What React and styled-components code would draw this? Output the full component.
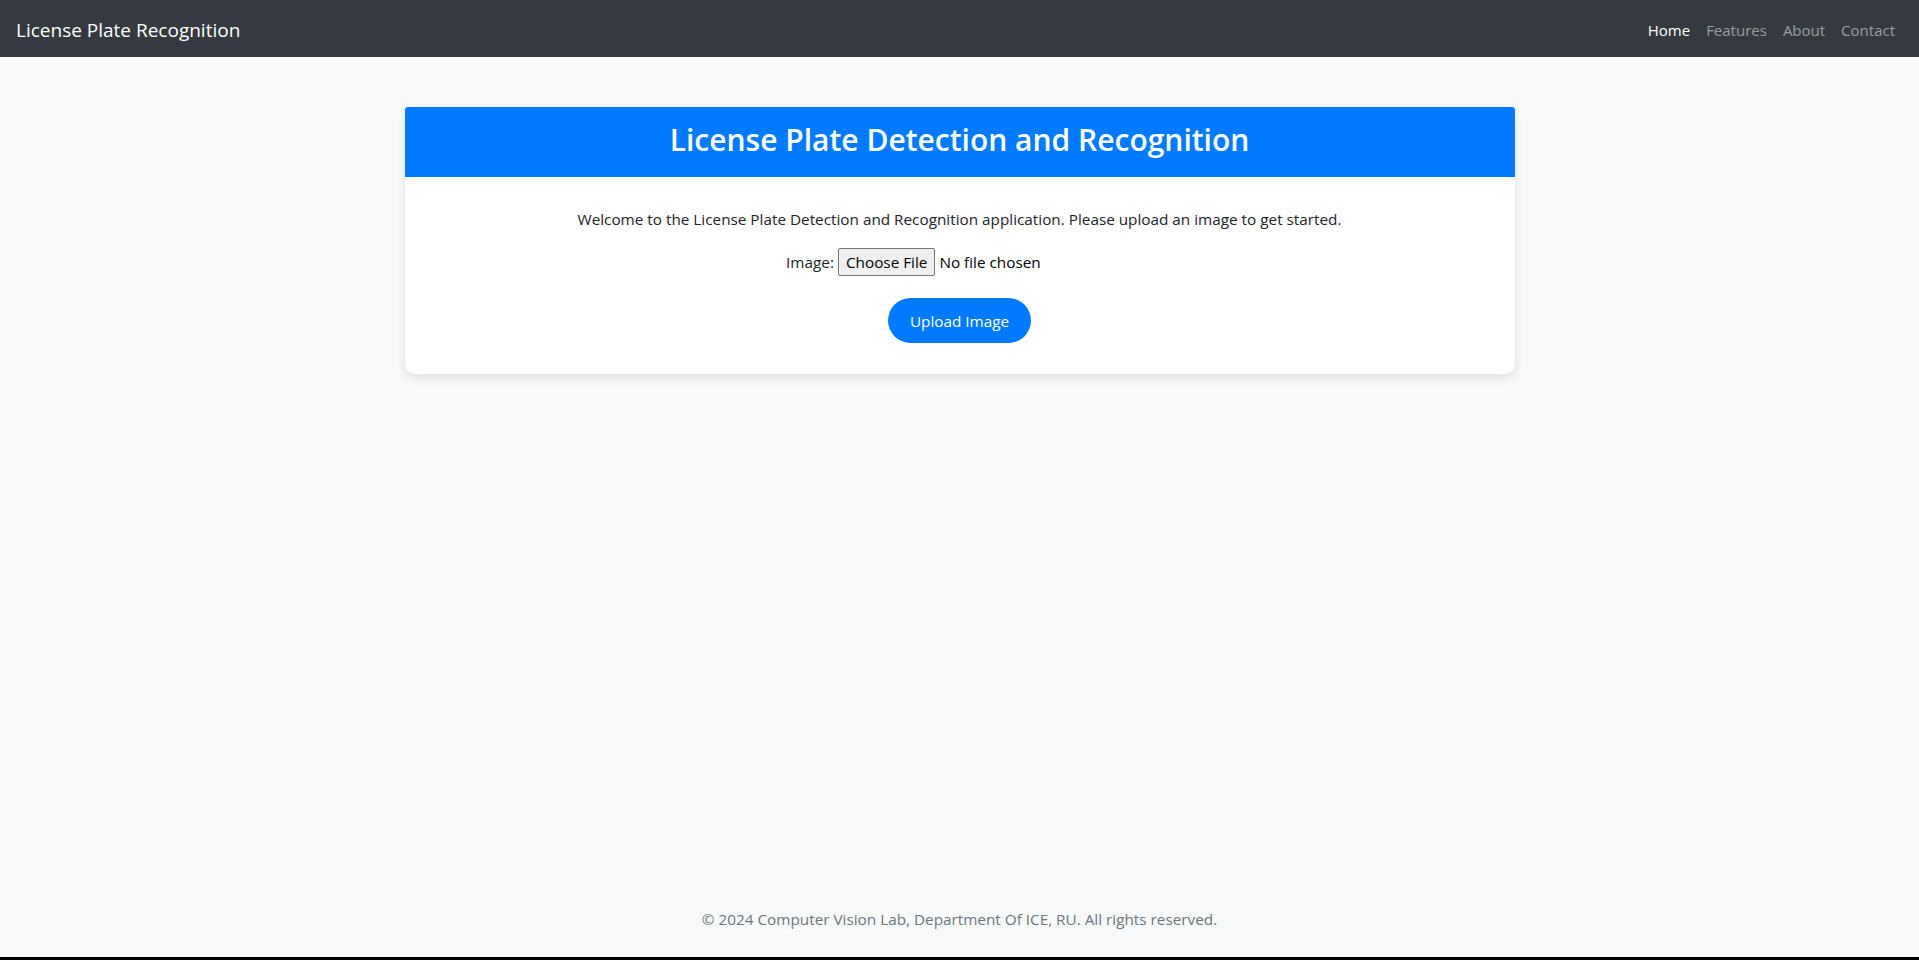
import React, { useState } from 'react';
import styled, { createGlobalStyle } from 'styled-components';

const GlobalStyle = createGlobalStyle`
  * { box-sizing: border-box; }
  body {
    margin: 0;
    background: #f8f9fa;
    font-family: "Open Sans", "Noto Sans", sans-serif;
    color: #212529;
  }
`;

const Page = styled.div`
  height: 100vh;
  display: flex;
  flex-direction: column;
  border-bottom: 3px solid #000;
`;

const Navbar = styled.nav`
  height: 57px;
  flex-shrink: 0;
  background: #343a40;
  padding: 2px 16px 0;
  display: flex;
  align-items: center;
  justify-content: space-between;
`;

const Brand = styled.a`
  color: #fff;
  font-size: 19px;
  text-decoration: none;
`;

const NavList = styled.ul`
  list-style: none;
  display: flex;
  margin: 0;
  padding: 0;
`;

const NavLink = styled.a`
  display: block;
  padding: 0 8px;
  font-size: 15px;
  text-decoration: none;
  color: ${p => (p.$active ? '#fff' : 'rgba(255, 255, 255, 0.5)')};
`;

const Main = styled.main`
  flex: 1;
`;

const Container = styled.div`
  width: 1110px;
  margin: 50px auto 0;
`;

const Card = styled.div`
  background: #fff;
  border-radius: 10px;
  box-shadow: 0 4px 10px rgba(0, 0, 0, 0.1);
`;

const CardHeader = styled.div`
  background: #007bff;
  border-radius: 3px 3px 0 0;
  padding: 10px 20px 14px;
  text-align: center;
`;

const Title = styled.h1`
  margin: 0;
  color: #fff;
  font-size: 30px;
  font-weight: 600;
  line-height: 46px;
`;

const CardBody = styled.div`
  padding: 30px 20px 31px;
  text-align: center;
  font-size: 15.3px;
`;

const Lead = styled.p`
  margin: 0 0 17px;
  line-height: 24px;
`;

const FileRow = styled.label`
  display: flex;
  justify-content: center;
  align-items: center;
  gap: 4px;
  height: 28px;
  margin-bottom: 22px;
  input { display: none; }
`;

const FileField = styled.span`
  display: flex;
  align-items: center;
  gap: 4px;
  width: 295px;
`;

const ChooseButton = styled.span`
  display: inline-flex;
  align-items: center;
  height: 28px;
  padding: 0 7px;
  background: #efefef;
  border: 1px solid #767676;
  border-radius: 2px;
  color: #000;
`;

const FileName = styled.span`
  color: #000;
`;

const UploadButton = styled.button`
  height: 45px;
  padding: 0 22px;
  border: none;
  border-radius: 23px;
  background: #007bff;
  color: #fff;
  font-family: inherit;
  font-size: 15.3px;
  cursor: pointer;
`;

const Footer = styled.footer`
  text-align: center;
  color: #6c757d;
  font-size: 15.3px;
  line-height: 24px;
  padding-bottom: 26px;
`;

const links = ['Home', 'Features', 'About', 'Contact'];

export default function App() {
  const [file, setFile] = useState(null);

  return (
    <Page>
      <GlobalStyle />
      <Navbar>
        <Brand href="#">License Plate Recognition</Brand>
        <NavList>
          {links.map((l, i) => (
            <li key={l}>
              <NavLink href="#" $active={i === 0}>{l}</NavLink>
            </li>
          ))}
        </NavList>
      </Navbar>
      <Main>
        <Container>
          <Card>
            <CardHeader>
              <Title>License Plate Detection and Recognition</Title>
            </CardHeader>
            <CardBody>
              <Lead>
                Welcome to the License Plate Detection and Recognition application. Please upload an image to get started.
              </Lead>
              <FileRow>
                Image:
                <input type="file" onChange={e => setFile(e.target.files[0])} />
                <FileField>
                  <ChooseButton>Choose File</ChooseButton>
                  <FileName>{file ? file.name : 'No file chosen'}</FileName>
                </FileField>
              </FileRow>
              <UploadButton type="button">Upload Image</UploadButton>
            </CardBody>
          </Card>
        </Container>
      </Main>
      <Footer>© 2024 Computer Vision Lab, Department Of ICE, RU. All rights reserved.</Footer>
    </Page>
  );
}
